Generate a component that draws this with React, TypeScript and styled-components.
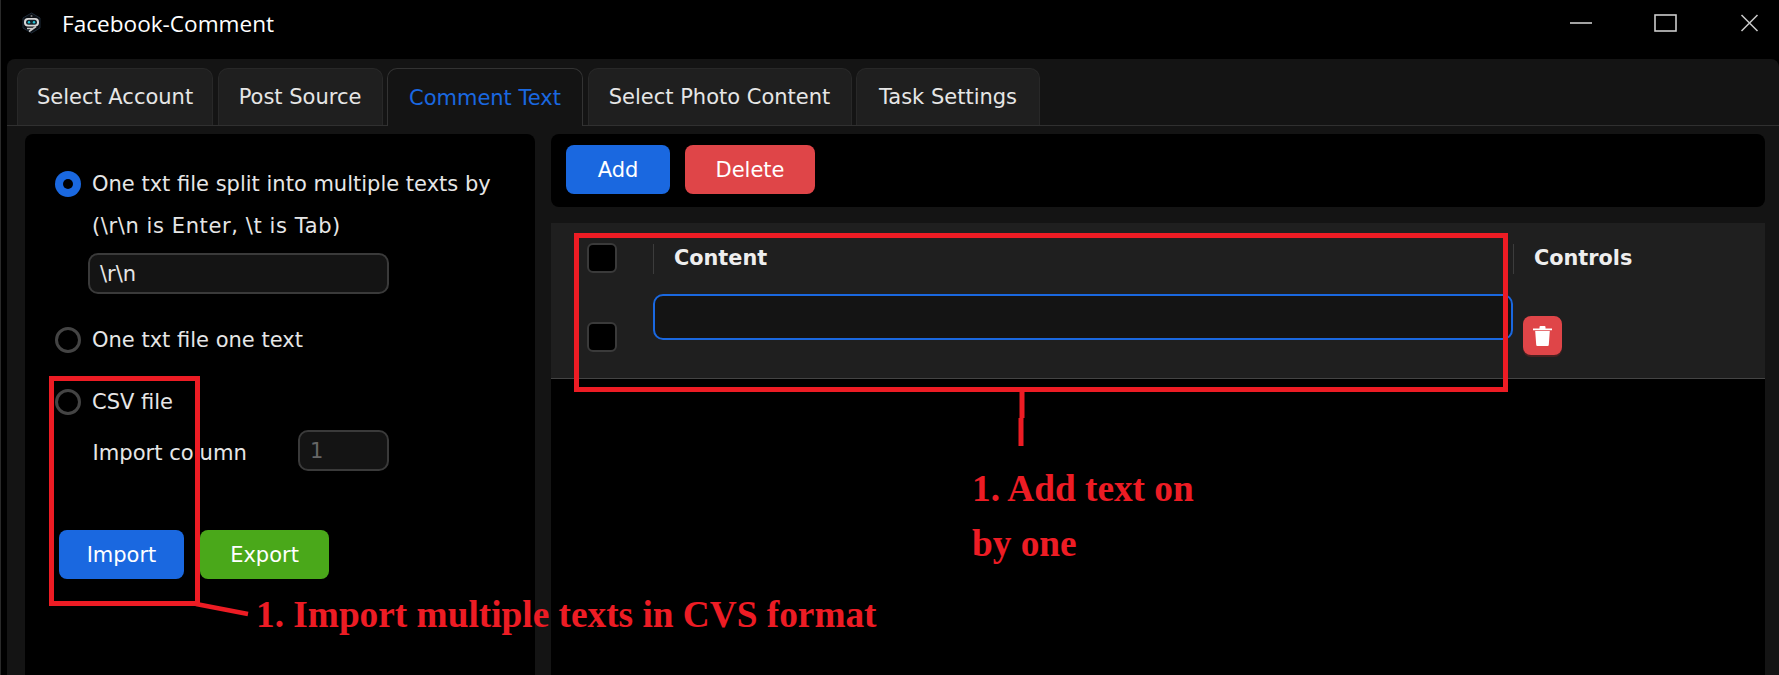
import React from "react";
import styled, { createGlobalStyle } from "styled-components";

const Global = createGlobalStyle`
  html, body { margin: 0; padding: 0; background: #000; }
  * { box-sizing: border-box; }
`;

const UI_FONT = `"DejaVu Sans", sans-serif`;
const BLUE = "#1a68e0";
const RED = "#df4548";
const MARK = "#ed1c24";

const Window = styled.div`
  position: relative;
  width: 1779px;
  height: 675px;
  overflow: hidden;
  background: #000;
  border-left: 1px solid #2a2a2a;
  display: flex;
  flex-direction: column;
  font-family: ${UI_FONT};
  color: #e6e6e6;
`;

const TitleBar = styled.header`
  height: 59px;
  flex: none;
  display: flex;
  align-items: center;
  padding: 0 0 13px 20px;
`;

const TitleText = styled.span`
  margin-left: 20px;
  font: 22.6px "Open Sans", sans-serif;
  color: #fff;
`;

const WindowControls = styled.div`
  margin-left: auto;
  display: flex;
  align-items: center;
  padding-right: 17px;
  gap: 60.5px;
`;

const Panel = styled.main`
  flex: 1;
  min-height: 0;
  margin-left: 6px;
  padding-top: 9px;
  background: #141414;
  border-radius: 8px 8px 0 0;
  display: flex;
  flex-direction: column;
`;

const TabBar = styled.nav`
  display: flex;
  gap: 4.5px;
  height: 58px;
  flex: none;
  padding-left: 10px;
  border-bottom: 1px solid #303030;
`;

const Tab = styled.div<{ $active?: boolean; $w: number }>`
  width: ${(p) => p.$w}px;
  height: ${(p) => (p.$active ? "58px" : "57px")};
  display: flex;
  align-items: center;
  justify-content: center;
  font-size: 21px;
  background: ${(p) => (p.$active ? "#141414" : "#1f1f1f")};
  color: ${(p) => (p.$active ? BLUE : "#e6e6e6")};
  border: 1px solid ${(p) => (p.$active ? "#333" : "#282828")};
  border-bottom: none;
  border-radius: 10px 10px 0 0;
  white-space: nowrap;
`;

const Body = styled.div`
  flex: 1;
  min-height: 0;
  display: grid;
  grid-template-columns: 510px 1214px;
  gap: 16px;
  padding: 8px 0 0 18px;
`;

const ImportPanel = styled.section`
  background: #000;
  border-radius: 8px 8px 0 0;
  padding: 37px 0 0 30px;
`;

const RadioRow = styled.div<{ $gap?: number }>`
  display: flex;
  align-items: center;
  gap: 11px;
  height: 26px;
  font-size: 21px;
  white-space: nowrap;
  margin-top: ${(p) => p.$gap ?? 0}px;
`;

const Radio = styled.span<{ $on?: boolean }>`
  width: 26px;
  height: 26px;
  flex: none;
  border-radius: 50%;
  background: ${(p) => (p.$on ? BLUE : "transparent")};
  border: ${(p) => (p.$on ? "none" : "3px solid #444")};
  display: flex;
  align-items: center;
  justify-content: center;
  &::after {
    content: "";
    display: ${(p) => (p.$on ? "block" : "none")};
    width: 10px;
    height: 10px;
    border-radius: 50%;
    background: #000;
  }
`;

const Hint = styled.div`
  margin: 16px 0 0 37px;
  height: 26px;
  line-height: 26px;
  font-size: 21px;
  letter-spacing: 0.6px;
  white-space: nowrap;
`;

const TextField = styled.div<{ $muted?: boolean; $w: number }>`
  width: ${(p) => p.$w}px;
  height: 41px;
  flex: none;
  padding: 0 10px;
  display: flex;
  align-items: center;
  background: #141414;
  border: 2px solid #3a3a3a;
  border-radius: 10px;
  font-size: 21px;
  color: ${(p) => (p.$muted ? "#666" : "#e6e6e6")};
`;

const SeparatorField = styled(TextField)`
  margin: 14px 0 0 33px;
`;

const ColumnRow = styled.div`
  display: flex;
  align-items: center;
  justify-content: space-between;
  width: 300.5px;
  margin: 15px 0 0 33.5px;
`;

const ColumnLabel = styled.span`
  padding: 3px 0 0 4px;
  font-size: 21.1px;
`;

const ActionRow = styled.div<{ $gap: number }>`
  display: flex;
  gap: ${(p) => p.$gap}px;
`;

const ImportActions = styled(ActionRow)`
  margin: 59px 0 0 4px;
`;

const ActionButton = styled.div<{ $bg: string; $w: number }>`
  width: ${(p) => p.$w}px;
  height: 49px;
  display: flex;
  align-items: center;
  justify-content: center;
  border-radius: 8px;
  background: ${(p) => p.$bg};
  color: #fff;
  font-size: 21px;
`;

const RightColumn = styled.section`
  display: flex;
  flex-direction: column;
  gap: 16px;
`;

const Toolbar = styled.div`
  height: 73px;
  flex: none;
  background: #000;
  border-radius: 8px;
  padding: 11px 15px;
`;

const TableArea = styled.div`
  flex: 1;
  min-height: 0;
  background: #000;
`;

const Table = styled.div`
  height: 156px;
  background: #1f1f1f;
  border-bottom: 1px solid #444;
  display: grid;
  grid-template-columns: 102px 860px 1fr;
  grid-template-rows: 71px 84px;
`;

const CheckCell = styled.div<{ $row?: boolean }>`
  padding: ${(p) => (p.$row ? "28px 0 0 36px" : "20px 0 0 36px")};
`;

const Checkbox = styled.span`
  display: block;
  width: 30px;
  height: 30px;
  background: #000;
  border: 2px solid #3a3a3a;
  border-radius: 6px;
`;

const HeadCell = styled.div`
  margin-top: 21px;
  height: 30px;
  padding: 0 0 2px 20px;
  border-left: 1px solid #3c3c3c;
  display: flex;
  align-items: center;
  font-weight: 700;
  font-size: 20.8px;
  color: #eee;
`;

const ContentField = styled.div`
  height: 46px;
  background: #141414;
  border: 2px solid ${BLUE};
  border-radius: 10px;
`;

const ControlCell = styled.div`
  padding: 22px 0 0 10px;
`;

const TrashButton = styled.div`
  width: 39px;
  height: 39px;
  border-radius: 8px;
  background: ${RED};
  box-shadow: 0 2px 0 #4a2020;
  display: flex;
  align-items: center;
  justify-content: center;
`;

/* ---- annotations painted over the screenshot ---- */
const Frame = styled.div`
  position: absolute;
  border: 5px solid ${MARK};
  pointer-events: none;
`;

const ImportFrame = styled(Frame)`
  left: 48px;
  top: 376px;
  width: 151px;
  height: 230px;
`;

const RowFrame = styled(Frame)`
  left: 573px;
  top: 233px;
  width: 934px;
  height: 159px;
`;

const Leaders = styled.svg`
  position: absolute;
  left: 0;
  top: 0;
  pointer-events: none;
`;

const Note = styled.div`
  position: absolute;
  font: 700 37.3px/55px "Liberation Serif", serif;
  color: ${MARK};
  white-space: nowrap;
`;

const ImportNote = styled(Note)`
  left: 255px;
  top: 587px;
`;

const RowNote = styled(Note)`
  left: 971px;
  top: 461px;
`;

const Logo = () => (
  <svg width="21" height="22" viewBox="0 0 21 22">
    <path d="M10.5 1 19 6v10l-8.5 5L2 16V6z" fill="#0b0f14" stroke="#1d2a38" />
    <rect x="3" y="6" width="15" height="8.5" rx="4" fill="#d8d8d8" />
    <rect x="5" y="7.8" width="11" height="5" rx="2.5" fill="#14232c" />
    <circle cx="8" cy="10.2" r="1.2" fill="#25c6d8" />
    <circle cx="13" cy="10.2" r="1.2" fill="#25c6d8" />
    <path d="M6 16.5h6M8 19.5l7-5" stroke="#c8c8c8" strokeWidth="1.6" fill="none" />
    <circle cx="10.5" cy="4" r="1" fill="#777" />
  </svg>
);

const Minimize = () => (
  <svg width="24" height="18" viewBox="0 0 24 18">
    <path d="M1 9h22" stroke="#ccc" strokeWidth="1.6" />
  </svg>
);

const Maximize = () => (
  <svg width="23" height="18" viewBox="0 0 23 18">
    <rect x="1" y="1" width="21" height="16" fill="none" stroke="#ccc" strokeWidth="1.6" />
  </svg>
);

const CloseIcon = () => (
  <svg width="25" height="18" viewBox="-3.5 0 25 18">
    <path d="M1 1l16 16M17 1 1 17" stroke="#ccc" strokeWidth="1.5" />
  </svg>
);

const TrashIcon = () => (
  <svg width="19" height="20" viewBox="0 0 19 20">
    <path d="M6.5 2.4V1a1 1 0 0 1 1-1h4a1 1 0 0 1 1 1v1.4H19v1.8H0V2.4z" fill="#fff" />
    <path d="M2.2 5h14.6l-1 13.8a1.2 1.2 0 0 1-1.2 1.2H4.4a1.2 1.2 0 0 1-1.2-1.2z" fill="#fff" />
  </svg>
);

const tabs = [
  { label: "Select Account", w: 196 },
  { label: "Post Source", w: 165 },
  { label: "Comment Text", w: 196 },
  { label: "Select Photo Content", w: 264 },
  { label: "Task Settings", w: 184 },
];

export default function App() {
  return (
    <Window>
      <Global />
      <TitleBar>
        <Logo />
        <TitleText>Facebook-Comment</TitleText>
        <WindowControls>
          <Minimize />
          <Maximize />
          <CloseIcon />
        </WindowControls>
      </TitleBar>
      <Panel>
        <TabBar>
          {tabs.map((t) => (
            <Tab key={t.label} $w={t.w} $active={t.label === "Comment Text"}>
              {t.label}
            </Tab>
          ))}
        </TabBar>
        <Body>
          <ImportPanel>
            <RadioRow>
              <Radio $on />
              One txt file split into multiple texts by
            </RadioRow>
            <Hint>(\r\n is Enter, \t is Tab)</Hint>
            <SeparatorField $w={301}>\r\n</SeparatorField>
            <RadioRow $gap={33}>
              <Radio />
              One txt file one text
            </RadioRow>
            <RadioRow $gap={36}>
              <Radio />
              CSV file
            </RadioRow>
            <ColumnRow>
              <ColumnLabel>Import column</ColumnLabel>
              <TextField $w={91} $muted>
                1
              </TextField>
            </ColumnRow>
            <ImportActions $gap={16}>
              <ActionButton $bg={BLUE} $w={125}>
                Import
              </ActionButton>
              <ActionButton $bg="#4aa81a" $w={129}>
                Export
              </ActionButton>
            </ImportActions>
          </ImportPanel>
          <RightColumn>
            <Toolbar>
              <ActionRow $gap={15}>
                <ActionButton $bg={BLUE} $w={104}>
                  Add
                </ActionButton>
                <ActionButton $bg={RED} $w={130}>
                  Delete
                </ActionButton>
              </ActionRow>
            </Toolbar>
            <TableArea>
              <Table>
                <CheckCell>
                  <Checkbox />
                </CheckCell>
                <HeadCell>Content</HeadCell>
                <HeadCell>Controls</HeadCell>
                <CheckCell $row>
                  <Checkbox />
                </CheckCell>
                <div>
                  <ContentField />
                </div>
                <ControlCell>
                  <TrashButton>
                    <TrashIcon />
                  </TrashButton>
                </ControlCell>
              </Table>
            </TableArea>
          </RightColumn>
        </Body>
      </Panel>
      <ImportFrame />
      <RowFrame />
      <Leaders width="1779" height="675" viewBox="0 0 1779 675">
        <path d="M195 604l52 10" stroke={MARK} strokeWidth="4.5" fill="none" />
        <path d="M1021 392v26M1020 418v28" stroke={MARK} strokeWidth="5" fill="none" />
      </Leaders>
      <ImportNote>1. Import multiple texts in CVS format</ImportNote>
      <RowNote>
        1. Add text on
        <br />
        by one
      </RowNote>
    </Window>
  );
}
